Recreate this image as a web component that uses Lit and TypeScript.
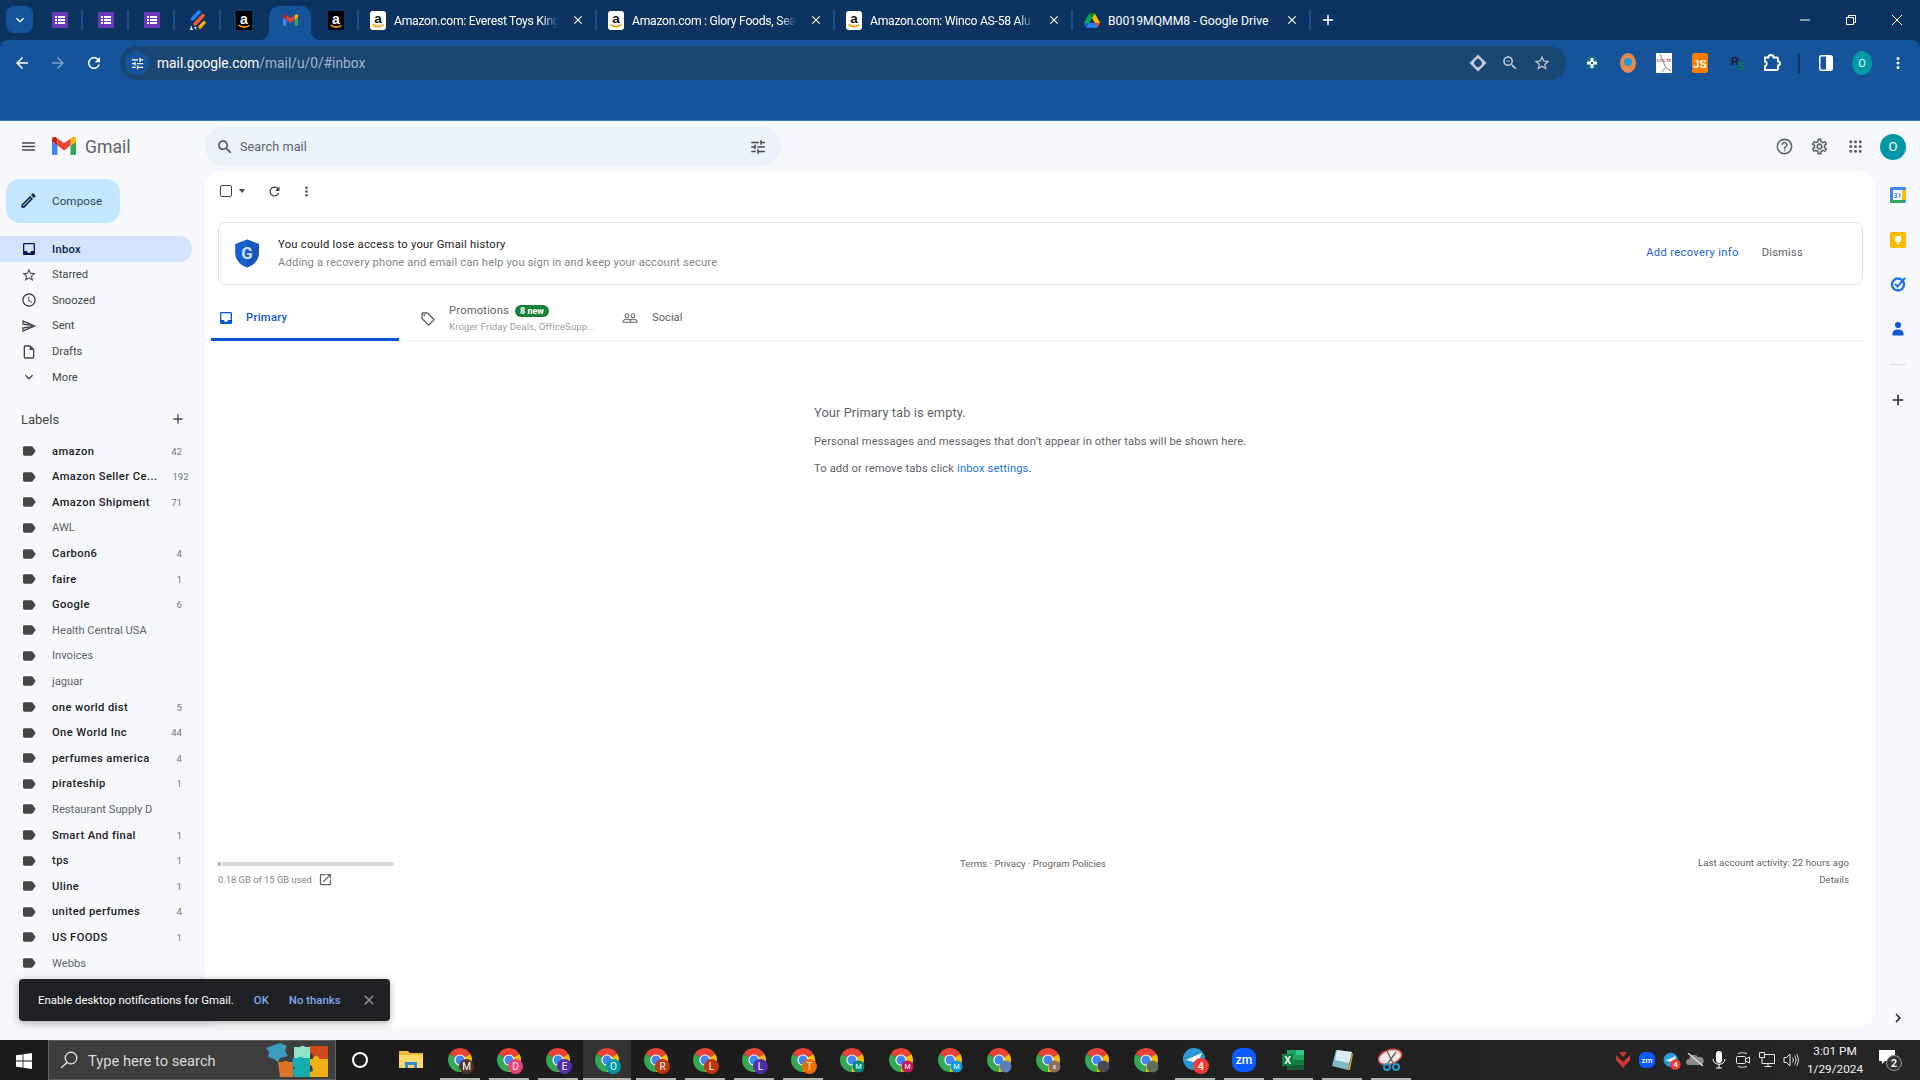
import { LitElement, html, css } from "lit";
import { customElement } from "lit/decorators.js";

const P = {
  menu: "M3 18h18v-2H3v2zm0-5h18v-2H3v2zm0-7v2h18V6H3z",
  search: "M15.5 14h-.79l-.28-.27C15.41 12.59 16 11.11 16 9.5 16 5.91 13.09 3 9.5 3S3 5.91 3 9.5 5.91 16 9.5 16c1.61 0 3.09-.59 4.23-1.57l.27.28v.79l5 4.99L20.49 19l-4.99-5zm-6 0C7.01 14 5 11.99 5 9.5S7.01 5 9.5 5 14 7.01 14 9.5 11.99 14 9.5 14z",
  zoomOut: "M15.5 14h-.79l-.28-.27C15.41 12.59 16 11.11 16 9.5 16 5.91 13.09 3 9.5 3S3 5.91 3 9.5 5.91 16 9.5 16c1.61 0 3.09-.59 4.23-1.57l.27.28v.79l5 4.99L20.49 19l-4.99-5zm-6 0C7.01 14 5 11.99 5 9.5S7.01 5 9.5 5 14 7.01 14 9.5 11.99 14 9.5 14zM7 9h5v1H7z",
  tune: "M3 17v2h6v-2H3zM3 5v2h10V5H3zm10 16v-2h8v-2h-8v-2h-2v6h2zM7 9v2H3v2h4v2h2V9H7zm14 4v-2H11v2h10zm-6-4h2V7h4V5h-4V3h-2v6z",
  help: "M11 18h2v-2h-2v2zm1-16C6.48 2 2 6.48 2 12s4.48 10 10 10 10-4.48 10-10S17.52 2 12 2zm0 18c-4.41 0-8-3.59-8-8s3.59-8 8-8 8 3.59 8 8-3.59 8-8 8zm0-14c-2.21 0-4 1.79-4 4h2c0-1.1.9-2 2-2s2 .9 2 2c0 2-3 1.75-3 5h2c0-2.25 3-2.5 3-5 0-2.21-1.79-4-4-4z",
  gear: "M19.43 12.98c.04-.32.07-.64.07-.98 0-.34-.03-.66-.07-.98l2.11-1.65c.19-.15.24-.42.12-.64l-2-3.46c-.09-.16-.26-.25-.44-.25-.06 0-.12.01-.17.03l-2.49 1c-.52-.4-1.08-.73-1.69-.98l-.38-2.65C14.46 2.18 14.25 2 14 2h-4c-.25 0-.46.18-.49.42l-.38 2.65c-.61.25-1.17.59-1.69.98l-2.49-1c-.06-.02-.12-.03-.18-.03-.17 0-.34.09-.43.25l-2 3.46c-.13.22-.07.49.12.64l2.11 1.65c-.04.32-.07.65-.07.98 0 .33.03.66.07.98l-2.11 1.65c-.19.15-.24.42-.12.64l2 3.46c.09.16.26.25.44.25.06 0 .12-.01.17-.03l2.49-1c.52.4 1.08.73 1.69.98l.38 2.65c.03.24.24.42.49.42h4c.25 0 .46-.18.49-.42l.38-2.65c.61-.25 1.17-.59 1.69-.98l2.49 1c.06.02.12.03.18.03.17 0 .34-.09.43-.25l2-3.46c.12-.22.07-.49-.12-.64l-2.11-1.65zm-1.98-1.71c.04.31.05.52.05.73 0 .21-.02.43-.05.73l-.14 1.13.89.7 1.08.84-.7 1.21-1.27-.51-1.04-.42-.9.68c-.43.32-.84.56-1.25.73l-1.06.43-.16 1.13-.2 1.35h-1.4l-.19-1.35-.16-1.13-1.06-.43c-.43-.18-.83-.41-1.23-.71l-.91-.7-1.06.43-1.27.51-.7-1.21 1.08-.84.89-.7-.14-1.13c-.03-.31-.05-.54-.05-.74s.02-.43.05-.73l.14-1.13-.89-.7-1.08-.84.7-1.21 1.27.51 1.04.42.9-.68c.43-.32.84-.56 1.25-.73l1.06-.43.16-1.13.2-1.35h1.39l.19 1.35.16 1.13 1.06.43c.43.18.83.41 1.23.71l.91.7 1.06-.43 1.27-.51.7 1.21-1.07.85-.89.7.14 1.13zM12 8c-2.21 0-4 1.79-4 4s1.79 4 4 4 4-1.79 4-4-1.79-4-4-4zm0 6c-1.1 0-2-.9-2-2s.9-2 2-2 2 .9 2 2-.9 2-2 2z",
  refresh: "M17.65 6.35C16.2 4.9 14.21 4 12 4c-4.42 0-7.99 3.58-7.99 8s3.57 8 7.99 8c3.73 0 6.84-2.55 7.73-6h-2.08c-.82 2.33-3.04 4-5.65 4-3.31 0-6-2.69-6-6s2.69-6 6-6c1.66 0 3.14.69 4.22 1.78L13 11h7V4l-2.35 2.35z",
  back: "M20 11H7.83l5.59-5.59L12 4l-8 8 8 8 1.41-1.41L7.83 13H20v-2z",
  forward: "M12 4l-1.41 1.41L16.17 11H4v2h12.17l-5.58 5.59L12 20l8-8z",
  star: "M22 9.24l-7.19-.62L12 2 9.19 8.63 2 9.24l5.46 4.73L5.82 21 12 17.27 18.18 21l-1.63-7.03L22 9.24zM12 15.4l-3.76 2.27 1-4.28-3.32-2.88 4.38-.38L12 6.1l1.71 4.04 4.38.38-3.32 2.88 1 4.28L12 15.4z",
  clock: "M11.99 2C6.47 2 2 6.48 2 12s4.47 10 9.99 10C17.52 22 22 17.52 22 12S17.52 2 11.99 2zM12 20c-4.42 0-8-3.58-8-8s3.58-8 8-8 8 3.58 8 8-3.58 8-8 8zm.5-13H11v6l5.25 3.15.75-1.23-4.5-2.67z",
  send: "M4.01 6.03l7.51 3.22-7.52-1 .01-2.22m7.5 8.72L4 17.97v-2.22l7.51-1M2.01 3L2 10l15 2-15 2 .01 7L23 12 2.01 3z",
  draft: "M14 2H6c-1.1 0-1.99.9-1.99 2L4 20c0 1.1.89 2 1.99 2H18c1.1 0 2-.9 2-2V8l-6-6zM6 20V4h7v5h5v11H6z",
  expand: "M16.59 8.59L12 13.17 7.41 8.59 6 10l6 6 6-6z",
  add: "M19 13h-6v6h-2v-6H5v-2h6V5h2v6h6v2z",
  inbox: "M19 3H5c-1.1 0-2 .9-2 2v14c0 1.1.9 2 2 2h14c1.1 0 2-.9 2-2V5c0-1.1-.9-2-2-2zm0 12h-4c0 1.66-1.35 3-3 3s-3-1.34-3-3H5V5h14v10z",
  label: "M17.63 5.84C17.27 5.33 16.67 5 16 5L5 5.01C3.9 5.01 3 5.9 3 7v10c0 1.1.9 1.99 2 1.99L16 19c.67 0 1.27-.33 1.63-.84L22 12l-4.37-6.16z",
  tag: "M21.41 11.58l-9-9C12.05 2.22 11.55 2 11 2H4c-1.1 0-2 .9-2 2v7c0 .55.22 1.05.59 1.42l9 9c.36.36.86.58 1.41.58.55 0 1.05-.22 1.41-.59l7-7c.37-.36.59-.86.59-1.41 0-.55-.23-1.06-.59-1.42zM13 20.01L4 11V4h7v-.01l9 9-7 7.02zM6.5 5A1.5 1.5 0 1 0 6.5 8 1.5 1.5 0 1 0 6.5 5z",
  people: "M16.5 13c-1.2 0-3.07.34-4.5 1-1.43-.67-3.3-1-4.5-1C5.33 13 1 14.08 1 16.25V19h22v-2.75c0-2.17-4.33-3.25-6.5-3.25zm-4 4.5h-10v-1.25c0-.54 2.56-1.75 5-1.75s5 1.21 5 1.75v1.25zm9 0H14v-1.25c0-.46-.2-.86-.52-1.22.88-.3 1.96-.53 3.02-.53 2.44 0 5 1.21 5 1.75v1.25zM7.5 12c1.93 0 3.5-1.57 3.5-3.5S9.43 5 7.5 5 4 6.57 4 8.5 5.57 12 7.5 12zm0-5.5c1.1 0 2 .9 2 2s-.9 2-2 2-2-.9-2-2 .9-2 2-2zm9 5.5c1.93 0 3.5-1.57 3.5-3.5S18.43 5 16.5 5 13 6.57 13 8.5s1.57 3.5 3.5 3.5zm0-5.5c1.1 0 2 .9 2 2s-.9 2-2 2-2-.9-2-2 .9-2 2-2z",
  pencil: "M3 17.25V21h3.75L17.81 9.94l-3.75-3.75L3 17.25zM5.92 19H5v-.92l9.06-9.06.92.92L5.92 19zM20.71 5.63l-2.34-2.34c-.2-.2-.45-.29-.71-.29s-.51.09-.7.29l-1.83 1.83 3.75 3.75 1.83-1.83c.39-.39.39-1.02 0-1.41z",
  open: "M19 19H5V5h7V3H5c-1.11 0-2 .9-2 2v14c0 1.1.89 2 2 2h14c1.1 0 2-.9 2-2v-7h-2v7zM14 3v2h3.59l-9.83 9.83 1.41 1.41L19 6.41V10h2V3h-7z",
  close: "M19 6.41L17.59 5 12 10.59 6.41 5 5 6.41 10.59 12 5 17.59 6.41 19 12 13.41 17.59 19 19 17.59 13.41 12z",
  chevron: "M10 6L8.59 7.41 13.17 12l-4.58 4.59L10 18l6-6z",
  more: "M12 8a2 2 0 1 0 0-4 2 2 0 0 0 0 4zm0 2a2 2 0 1 0 0 4 2 2 0 0 0 0-4zm0 6a2 2 0 1 0 0 4 2 2 0 0 0 0-4z",
  apps: "M6 8a2 2 0 1 0 0-4 2 2 0 0 0 0 4zm6 0a2 2 0 1 0 0-4 2 2 0 0 0 0 4zm6 0a2 2 0 1 0 0-4 2 2 0 0 0 0 4zM6 14a2 2 0 1 0 0-4 2 2 0 0 0 0 4zm6 0a2 2 0 1 0 0-4 2 2 0 0 0 0 4zm6 0a2 2 0 1 0 0-4 2 2 0 0 0 0 4zM6 20a2 2 0 1 0 0-4 2 2 0 0 0 0 4zm6 0a2 2 0 1 0 0-4 2 2 0 0 0 0 4zm6 0a2 2 0 1 0 0-4 2 2 0 0 0 0 4z",
  shield: "M12 .5 2 4.200v7.400C2 17.500 6.200 22.400 12 24c5.800-1.600 10-6.500 10-12.400V4.200z",
};

const icon = (d: string, size: number, color: string) =>
  html`<svg class="ic" width=${size} height=${size} viewBox="0 0 24 24" fill=${color}><path d=${d}></path></svg>`;

const formsIcon = () => html`<svg class="ic" width="16" height="16" viewBox="0 0 16 16">
  <rect width="16" height="16" rx="1" fill="#673ab7"></rect>
  <path d="M3 4h2v2H3zM6 4h7v2H6zM3 7h2v2H3zM6 7h7v2H6zM3 10h2v2H3zM6 10h7v2H6z" fill="#fff"></path>
</svg>`;

const amazonDark = () => html`<svg class="ic" width="16" height="19" viewBox="0 0 16 19">
  <rect width="16" height="19" fill="#000"></rect>
  <text x="8" y="12.500" text-anchor="middle" font-family="Liberation Sans" font-weight="700" font-size="14" fill="#fff">a</text>
  <path d="M2.500 14.200c3.400 2.400 7.400 2.400 11 .2" stroke="#f90" stroke-width="1.600" fill="none"></path>
</svg>`;

const amazonLight = () => html`<svg class="ic" width="16" height="19" viewBox="0 0 16 19">
  <rect width="16" height="19" rx="3" fill="#fff"></rect>
  <text x="8" y="11.500" text-anchor="middle" font-family="Liberation Sans" font-weight="700" font-size="13.500" fill="#111">a</text>
  <path d="M2.500 13.500c3.400 2.600 7.400 2.600 11 .2" stroke="#f90" stroke-width="1.600" fill="none"></path>
</svg>`;

const jiraIcon = () => html`<svg class="ic" width="16" height="20" viewBox="0 0 16 20">
  <path d="M2.500 9 9 2" stroke="#2684ff" stroke-width="3.400" stroke-linecap="round"></path>
  <path d="M5 14 13 5.500" stroke="#ff5630" stroke-width="3.400" stroke-linecap="round"></path>
  <path d="M10 17l4-4.400" stroke="#ffab00" stroke-width="3.400" stroke-linecap="round"></path>
  <path d="M1 15.500 3 20H0zM6 20l-2-3 2.400-.2z" fill="#fff"></path>
</svg>`;

const gmailLogo = (w: number, h: number) => html`<svg class="ic" width=${w} height=${h} viewBox="0 0 24 18">
  <path fill="#4285f4" d="M1.600 18H5.500V8.500L0 4.400V16.400C0 17.300.7 18 1.600 18z"></path>
  <path fill="#34a853" d="M18.500 18H22.400C23.300 18 24 17.300 24 16.400V4.400L18.500 8.500z"></path>
  <path fill="#fbbc04" d="M18.500 1.400V8.500L24 4.400V2.200C24 .2 21.700-1 20.100.2z"></path>
  <path fill="#ea4335" d="M5.500 8.500V1.400L12 6.300 18.500 1.400V8.500L12 13.400z"></path>
  <path fill="#c5221f" d="M0 2.200V4.400L5.500 8.500V1.400L3.900.2C2.300-1 0 .2 0 2.200z"></path>
</svg>`;

const driveIcon = () => html`<svg class="ic" width="16" height="15" viewBox="0 0 87.3 78">
  <path fill="#0066da" d="m6.600 66.850 3.850 6.650c.8 1.400 1.950 2.500 3.300 3.300l13.750-23.800h-27.500c0 1.550.4 3.100 1.200 4.500z"></path>
  <path fill="#00ac47" d="m43.650 25-13.750-23.800c-1.350.8-2.500 1.900-3.300 3.300l-25.400 44a9.060 9.060 0 0 0 -1.200 4.500h27.500z"></path>
  <path fill="#ea4335" d="m73.550 76.800c1.350-.8 2.500-1.900 3.300-3.300l1.600-2.750 7.650-13.250c.8-1.400 1.200-2.950 1.200-4.500h-27.502l5.852 11.500z"></path>
  <path fill="#00832d" d="m43.650 25 13.750-23.800c-1.350-.8-2.900-1.200-4.500-1.200h-18.500c-1.600 0-3.150.45-4.500 1.200z"></path>
  <path fill="#2684fc" d="m59.800 53h-32.300l-13.750 23.800c1.350.8 2.900 1.200 4.500 1.200h50.800c1.600 0 3.150-.45 4.500-1.200z"></path>
  <path fill="#ffba00" d="m73.400 26.500-12.700-22c-.8-1.400-1.950-2.500-3.300-3.300l-13.750 23.800 16.150 28h27.450c0-1.550-.4-3.100-1.200-4.500z"></path>
</svg>`;

const chromeIcon = (badge: string, letter: string, small = false) => html`<svg class="ic" width="32" height="32" viewBox="0 0 32 32">
  <path fill="#ea4335" d="M16 16 5.610 10A12 12 0 0 1 26.390 10Z"></path>
  <path fill="#fbbc04" d="M16 16 26.390 10A12 12 0 0 1 16 28Z"></path>
  <path fill="#34a853" d="M16 16 16 28A12 12 0 0 1 5.610 10Z"></path>
  <circle cx="16" cy="16" r="5.600" fill="#fff"></circle>
  <circle cx="16" cy="16" r="4.500" fill="#4285f4"></circle>
  <circle cx="22.500" cy="22.500" r=${small ? 6 : 7.5} fill=${badge}></circle>
  <text x="22.500" y=${small ? 25 : 26} text-anchor="middle" font-family="Roboto" font-size=${small ? 7 : 10} fill="#fff">${letter}</text>
</svg>`;

const puzzle = () => html`<svg class="ic" width="62" height="34" viewBox="0 0 62 34">
  <path fill="#3f9cc0" d="M0 5 14 0l7 3-2 5 3 5-8 2-2 4-4-3-6-2 1-5z"></path>
  <path fill="#92e3cc" d="M28 4h6a3 3 0 0 1 5 0h5v11H28z"></path>
  <path fill="#d2481a" d="M44 3h18v13H48l-1-4-3-2z"></path>
  <path fill="#dd7428" d="M12 19h5a3 3 0 0 1 5 0h5v15H14z"></path>
  <path fill="#17aeb2" d="M27 15h5a3 3 0 0 1 5 0h7v19H28l-2-7 3-2-3-3z"></path>
  <path fill="#f0b018" d="M44 16h18v18H44v-5l3-1-1-5-2-1z"></path>
  <circle cx="50" cy="16" r="3" fill="#f0b018"></circle>
</svg>`;

const win = () => html`<svg class="ic" width="16" height="16" viewBox="0 0 16 16">
  <path fill="#fff" d="M0 2.300 6.600 1.400V7.600H0zM7.400 1.300 16 0V7.600H7.400zM0 8.400H6.600V14.600L0 13.700zM7.400 8.400H16V16L7.400 14.700z"></path>
</svg>`;

const folder = () => html`<svg class="ic" width="24" height="24" viewBox="0 0 24 24">
  <path fill="#f0b83c" d="M0 3h9l2 2h13v15H0z"></path>
  <path fill="#ffd968" d="M0 7h24v13H0z"></path>
  <path fill="#2f8fd6" d="M6 14h12v6h-3v-3H9v3H6z"></path>
</svg>`;

const telegram = (size: number, fontSize: number) => html`<svg class="ic" width=${size} height=${size} viewBox="0 0 32 32">
  <circle cx="15" cy="15" r="11" fill="#2a9ad6"></circle>
  <path fill="#fff" d="M7 16 23 9 18 21l-3-3z"></path>
  <circle cx="22" cy="22" r="8" fill="#ef3b36"></circle>
  <text x="22" y="26" text-anchor="middle" font-family="Roboto" font-weight="500" font-size=${fontSize} fill="#fff">4</text>
</svg>`;

const zoomApp = (size: number) => html`<svg class="ic" width=${size} height=${size} viewBox="0 0 24 24">
  <rect width="24" height="24" rx="9" fill="#0b5cff"></rect>
  <text x="12" y="16" text-anchor="middle" font-family="Roboto" font-weight="500" font-size="12" fill="#fff">zm</text>
</svg>`;

const excel = () => html`<svg class="ic" width="24" height="24" viewBox="0 0 24 24">
  <path fill="#21a366" d="M6 2h17v20H6z"></path>
  <path fill="#107c41" d="M6 12h17v5H6z"></path>
  <path fill="#185c37" d="M6 17h17v5H6z"></path>
  <path fill="#33c481" d="M15 2h8v5h-8z"></path>
  <rect x="1" y="6" width="11" height="12" fill="#107c41"></rect>
  <text x="6.500" y="15.500" text-anchor="middle" font-family="Liberation Sans" font-weight="700" font-size="10" fill="#fff">X</text>
</svg>`;

const notepad = () => html`<svg class="ic" width="24" height="24" viewBox="0 0 24 24">
  <path fill="#7fb9c9" d="M6 2 22 4 18 22 2 18z"></path>
  <path fill="#d8eef2" d="M7 2 22 4 19 15 5 12z"></path>
  <path fill="#c9a63a" d="M18 22 22 5l1 1-3 16z"></path>
</svg>`;

const snip = () => html`<svg class="ic" width="26" height="24" viewBox="0 0 26 24">
  <ellipse cx="12" cy="9" rx="12" ry="7" fill="#f3e9e7" stroke="#d34b45" stroke-width="1.600" transform="rotate(-18 12 9)"></ellipse>
  <path d="M9 3l6 12M18 4 10 15" stroke="#666" stroke-width="1.400"></path>
  <circle cx="18" cy="19" r="3" fill="none" stroke="#1c9ad6" stroke-width="2"></circle>
  <circle cx="9" cy="19" r="3" fill="none" stroke="#1c9ad6" stroke-width="2"></circle>
</svg>`;

const taskChrome: [string, string, boolean][] = [
  ["#4e342e", "M", false], ["#ec407a", "D", false], ["#512da8", "E", false], ["#0097a7", "O", false],
  ["#bf360c", "R", false], ["#bf360c", "L", false], ["#512da8", "L", false], ["#ef6c00", "T", false],
  ["#00897b", "M", true], ["#c2185b", "M", true], ["#039be5", "M", true], ["#5b7fb5", "", true],
  ["#8d6e63", "x", true], ["#4a4a55", "", true], ["#5d7060", "", true],
];

const navItems = [
  ["Inbox", P.inbox, true], ["Starred", P.star, false], ["Snoozed", P.clock, false],
  ["Sent", P.send, false], ["Drafts", P.draft, false], ["More", P.expand, false],
] as [string, string, boolean][];

const labels: [string, string][] = [
  ["amazon", "42"], ["Amazon Seller Ce...", "192"], ["Amazon Shipment", "71"], ["AWL", ""],
  ["Carbon6", "4"], ["faire", "1"], ["Google", "6"], ["Health Central USA", ""], ["Invoices", ""],
  ["jaguar", ""], ["one world dist", "5"], ["One World Inc", "44"], ["perfumes america", "4"],
  ["pirateship", "1"], ["Restaurant Supply D", ""], ["Smart And final", "1"], ["tps", "1"],
  ["Uline", "1"], ["united perfumes", "4"], ["US FOODS", "1"], ["Webbs", ""],
];

@customElement("app-root")
export class AppRoot extends LitElement {
  static styles = css`
    :host {
      display: flex;
      flex-direction: column;
      width: 1920px;
      height: 1080px;
      overflow: hidden;
      font-family: Roboto, sans-serif;
      background: #0d3461;
    }
    .ic { display: block; flex: none; }

    /* browser tab strip */
    .tabstrip { display: flex; align-items: stretch; height: 40px; background: #0d3461; padding-left: 6px; flex: none; }
    .tabsearch { width: 27px; height: 27px; margin: 6px 4px 0 0; border-radius: 8px; background: #15549a; display: flex; align-items: center; justify-content: center; }
    .pin { width: 46px; display: flex; align-items: center; justify-content: center; position: relative; }
    .sep { background: linear-gradient(#1a4f8e, #1a4f8e) right center / 2px 20px no-repeat; }
    .pin.active { width: 42px; margin: 6px 2px 0; background: #15549a; border-radius: 10px 10px 0 0; padding-bottom: 6px; box-sizing: border-box; }
    .pin.active::before, .pin.active::after { content: ""; position: absolute; bottom: 0; width: 10px; height: 10px; }
    .pin.active::before { left: -10px; background: radial-gradient(circle at 0 0, transparent 10px, #15549a 10.5px); }
    .pin.active::after { right: -10px; background: radial-gradient(circle at 100% 0, transparent 10px, #15549a 10.5px); }
    .tab { width: 238px; box-sizing: border-box; display: flex; align-items: center; gap: 8px; padding: 0 12px 0 11px; color: #fff; font-size: 12.2px; }
    .tab .title { flex: 1; min-width: 0; padding-top: 1px; white-space: nowrap; letter-spacing: -.28px; -webkit-mask-image: linear-gradient(90deg, #000 88%, transparent 97%); mask-image: linear-gradient(90deg, #000 88%, transparent 97%); }
    .tab .title.full { letter-spacing: 0; -webkit-mask-image: none; mask-image: none; }
    .newtab { width: 34px; display: flex; align-items: center; justify-content: center; }
    .grow { flex: 1; }
    .winbtn { width: 46px; display: flex; align-items: center; justify-content: center; }

    /* browser toolbar */
    .toolbar { height: 80px; flex: none; background: #15549a; border-bottom: 1px solid #3f7cbd; border-radius: 8px 8px 0 0; display: flex; align-items: flex-start; }
    .navbtns { display: flex; width: 120px; height: 46px; padding-left: 4px; box-sizing: border-box; }
    .navbtn { width: 36px; height: 46px; display: flex; align-items: center; justify-content: center; }
    .omni { width: 1446px; height: 34px; margin-top: 6px; background: #1a4674; border-radius: 17px; display: flex; align-items: center; color: #fff; font-size: 13.75px; box-sizing: border-box; padding: 0 8px 0 5px; }
    .chip { width: 24px; height: 24px; border-radius: 50%; background: #15549a; display: flex; align-items: center; justify-content: center; margin-right: 8px; }
    .url { flex: 1; white-space: nowrap; }
    .url span { color: #a4b5c8; }
    .omni-ic { width: 32px; display: flex; justify-content: center; }
    .exts { display: flex; height: 46px; padding-left: 8px; box-sizing: border-box; align-items: center; }
    .ext { width: 36px; display: flex; justify-content: center; align-items: center; }
    .bar { width: 2px; height: 20px; background: #0d3461; margin: 0 8px 0 8px; }
    .tb-avatar { width: 20px; height: 24px; border-radius: 50%; background: #0097a7; color: #dff; font-size: 11px; display: flex; align-items: center; justify-content: center; }

    /* gmail shell */
    .gmail { flex: 1; display: flex; flex-direction: column; position: relative; min-height: 0; background: #f6f8fc; }
    .ghead { height: 51px; flex: none; display: flex; align-items: center; }
    .brand { width: 205px; display: flex; align-items: center; box-sizing: border-box; padding: 0 0 1px 20px; }
    .brand .word { font-size: 17.6px; color: #5f6368; margin-left: 9px; padding-top: 2px; }
    .brand .logo { margin-left: 15px; }
    .search { width: 576px; height: 39px; background: #eaf1fb; border-radius: 20px; display: flex; align-items: center; box-sizing: border-box; padding: 0 14px 0 11px; font-size: 12.6px; color: #5f6368; }
    .search .ph { flex: 1; margin-left: 6px; letter-spacing: .1px; }
    .hicons { margin-left: auto; display: flex; align-items: center; padding-right: 14px; }
    .hicons .hi { width: 35.5px; display: flex; justify-content: center; }
    .gavatar { width: 26px; height: 26px; border-radius: 50%; background: #0097a7; color: #fff; font-size: 13px; display: flex; align-items: center; justify-content: center; margin-left: 7px; }

    .gbody { flex: 1; display: flex; min-height: 0; }
    .side { width: 205px; flex: none; overflow: hidden; }
    .compose { width: 114px; height: 44px; margin: 7px 0 13.4px 6px; background: #c2e7ff; border-radius: 14px; display: flex; align-items: center; padding: 0 0 1px 13px; box-sizing: border-box; gap: 14px; color: #2a4658; font-size: 11.6px; letter-spacing: .1px; }
    .nav { width: 192px; height: 25.6px; display: flex; align-items: center; padding-left: 21px; gap: 15px; box-sizing: border-box; border-radius: 0 13px 13px 0; color: #444746; font-size: 11.2px; }
    .nav.on { background: #d3e3fd; color: #041e49; font-weight: 500; letter-spacing: .3px; }
    .lab-head { height: 32px; margin: 13.2px 0 3.2px; width: 192px; display: flex; align-items: center; justify-content: space-between; padding: 0 6px 0 21px; box-sizing: border-box; color: #444746; font-size: 13px; }
    .lab { width: 182px; height: 25.6px; display: flex; align-items: center; box-sizing: border-box; padding-left: 21px; gap: 15px; font-size: 11.2px; color: #5f6368; white-space: nowrap; }
    .lab.bold { font-weight: 500; color: #202124; letter-spacing: .4px; }
    .lab .name { flex: 1; }
    .lab .count { font-size: 9.6px; font-weight: 400; color: #777; letter-spacing: 0; }

    .card { width: 1670px; flex: none; margin-bottom: 13px; background: #fff; border-radius: 16px; display: flex; flex-direction: column; box-sizing: border-box; }
    .actions { height: 38px; flex: none; display: flex; align-items: center; padding-left: 13px; }
    .check { width: 12px; height: 12px; border: 1.5px solid #444746; border-radius: 2px; box-sizing: border-box; margin-left: 2px; }
    .caret { width: 0; height: 0; border: 3px solid transparent; border-top: 4px solid #444746; border-bottom: 0; margin-left: 7px; }
    .act { margin-left: 21.5px; }
    .act2 { margin-left: 17px; }

    .banner { margin: 12px 12px 0 13px; height: 63px; border: 1px solid #dfe1e5; border-radius: 8px; box-sizing: border-box; display: flex; align-items: center; padding-left: 16px; flex: none; }
    .banner .txt { margin-left: 19px; flex: 1; }
    .banner .t1 { font-size: 11.2px; color: #202124; line-height: 14px; letter-spacing: .27px; }
    .banner .t2 { font-size: 11.2px; color: #80868b; line-height: 14px; margin-top: 4px; letter-spacing: .16px; }
    .banner .a1 { font-size: 11.2px; color: #1a5fd6; margin: 0 23px 2px 0; letter-spacing: .33px; }
    .banner .a2 { font-size: 11.2px; color: #5f6368; margin: 0 59px 2px 0; letter-spacing: .2px; }

    .tabs { margin: 11px 12px 0 0; height: 45px; flex: none; display: flex; padding-left: 6px; box-shadow: inset 0 -1px 0 #eceff1; box-sizing: border-box; }
    .gtab { display: flex; align-items: center; box-sizing: border-box; font-size: 11.2px; color: #5f6368; }
    .gtab.primary { width: 188px; padding: 1px 0 0 7px; gap: 12px; color: #0b57d0; font-weight: 500; letter-spacing: .3px; border-bottom: 3px solid #0b57d0; }
    .gtab.promo { width: 207px; padding-left: 21px; gap: 13px; }
    .gtab.social { padding: 0 0 2px 16px; gap: 14px; }
    .promo-top { display: flex; align-items: center; gap: 6px; line-height: 14px; letter-spacing: .2px; }
    .new { background: #188038; color: #fff; font-size: 9px; font-weight: 700; line-height: 12px; padding: 0 5px; border-radius: 6px; letter-spacing: 0; }
    .promo-sub { font-size: 9.6px; color: #9aa0a6; line-height: 12px; margin-top: 3px; white-space: nowrap; letter-spacing: .12px; }

    .empty { height: 515px; flex: none; padding: 64px 0 0 609px; box-sizing: border-box; color: #5f6368; }
    .empty .h { font-size: 12.8px; line-height: 16px; margin-bottom: 13.5px; letter-spacing: .1px; }
    .empty p { font-size: 11.2px; line-height: 14px; margin: 0 0 13px; letter-spacing: .12px; }
    .empty a { color: #1a73e8; }

    .foot { display: flex; padding: 0 26px 0 13px; font-size: 9.6px; color: #5f6368; line-height: 14px; }
    .storage { width: 176px; }
    .meter { height: 4px; margin: 6px 0 6px; background: #dadce0; border-radius: 2px; border-left: 1px solid #5f6368; }
    .used { display: flex; align-items: center; gap: 6px; white-space: nowrap; font-size: 9.4px; color: #80868b; }
    .links { margin-left: 566px; letter-spacing: .02px; padding-top: .5px; }
    .activity { margin-left: auto; text-align: right; letter-spacing: .07px; }
    .activity div + div { margin-top: 3px; }

    .rail { flex: 1; display: flex; flex-direction: column; align-items: center; padding-top: 15px; padding-bottom: 13px; }
    .rail .ri { height: 44.5px; display: flex; align-items: flex-start; justify-content: center; }
    .rail .rsep { width: 16px; height: 1px; background: #dadce0; margin-bottom: 26px; margin-top: -1px; }
    .rail .rlast { margin-top: auto; }

    .snack { position: absolute; left: 19px; bottom: 19px; width: 371px; height: 42px; background: #202124; border-radius: 4px; box-shadow: 0 2px 8px rgba(0, 0, 0, .3); display: flex; align-items: center; padding-left: 19px; box-sizing: border-box; color: #fff; font-size: 11.4px; white-space: nowrap; z-index: 2; }
    .snack b { font-weight: 500; color: #7fa9ea; }
    .snack .ok { margin-left: 20px; }
    .snack .no { margin-left: 20px; }
    .snack .x { margin-left: 20px; }

    /* windows taskbar */
    .taskbar { height: 40px; flex: none; background: linear-gradient(90deg, #1b1b1b, #1e1e1e 50%, #262626); display: flex; align-items: stretch; color: #fff; }
    .start { width: 48px; display: flex; align-items: center; justify-content: center; padding-top: 1px; box-sizing: border-box; }
    .tsearch { width: 288px; box-sizing: border-box; background: #3e3e3e; border: 1px solid #636363; display: flex; align-items: center; padding-left: 11px; color: #d8d8d8; font-size: 14.7px; }
    .tsearch .ph { flex: 1; margin-left: 10px; padding-top: 2px; }
    .tsearch .ic:last-child { margin-right: 7px; }
    .cortana { width: 48px; display: flex; align-items: center; justify-content: center; margin-right: 2px; }
    .ring { width: 12px; height: 12px; border: 2px solid #fff; border-radius: 50%; }
    .app { width: 49px; display: flex; align-items: center; justify-content: center; box-sizing: border-box; }
    .app.run { background: linear-gradient(#b5b5b0, #b5b5b0) center bottom / 40px 2px no-repeat; }
    .app.active { background: linear-gradient(#b5b5b0, #b5b5b0) center bottom / 48px 2px no-repeat, linear-gradient(#333, #333) center / 48px 40px no-repeat; }
    .tray { width: 24px; display: flex; align-items: center; justify-content: center; }
    .clock { width: 64px; text-align: center; font-size: 11.8px; line-height: 18px; padding-top: 2px; box-sizing: border-box; color: #f2f2f2; white-space: nowrap; }
    .notif { width: 53px; display: flex; align-items: center; padding-left: 12px; box-sizing: border-box; }
  `;

  render() {
    const pinned = [formsIcon(), formsIcon(), formsIcon(), jiraIcon(), amazonDark()];
    const tabs: [unknown, string, boolean][] = [
      [amazonLight(), "Amazon.com: Everest Toys King", true],
      [amazonLight(), "Amazon.com : Glory Foods, Sea", true],
      [amazonLight(), "Amazon.com: Winco AS-58 Alu", true],
      [driveIcon(), "B0019MQMM8 - Google Drive", false],
    ];
    return html`
      <div class="tabstrip">
        <div class="tabsearch">${icon(P.expand, 16, "#fff")}</div>
        ${pinned.map((p, i) => html`<div class="pin ${i < 4 ? "sep" : ""}">${p}</div>`)}
        <div class="pin active">${gmailLogo(15, 12)}</div>
        <div class="pin sep">${amazonDark()}</div>
        ${tabs.map(
          ([ic, t, fade]) => html`<div class="tab sep">
            ${ic}
            <div class="title ${fade ? "" : "full"}">${t}</div>
            ${icon(P.close, 14, "#fff")}
          </div>`
        )}
        <div class="newtab">${icon(P.add, 18, "#fff")}</div>
        <div class="grow"></div>
        <div class="winbtn"><svg width="10" height="10" viewBox="0 0 10 10"><path d="M0 5h10" stroke="#fff"></path></svg></div>
        <div class="winbtn"><svg width="10" height="10" viewBox="0 0 10 10"><path d="M.5 2.500h7v7h-7zM2.500 2.500v-2h7v7h-2" stroke="#fff" fill="none"></path></svg></div>
        <div class="winbtn"><svg width="10" height="10" viewBox="0 0 10 10"><path d="M0 0l10 10M10 0 0 10" stroke="#fff"></path></svg></div>
      </div>

      <div class="toolbar">
        <div class="navbtns">
          <div class="navbtn">${icon(P.back, 18, "#fff")}</div>
          <div class="navbtn">${icon(P.forward, 18, "#7d9cc2")}</div>
          <div class="navbtn">${icon(P.refresh, 18, "#fff")}</div>
        </div>
        <div class="omni">
          <div class="chip">${icon(P.tune, 15, "#fff")}</div>
          <div class="url">mail.google.com<span>/mail/u/0/#inbox</span></div>
          <div class="omni-ic"><svg width="18" height="18" viewBox="0 0 18 18"><path d="M9 .5 17.500 9 9 17.500.5 9zM9 4.500C7 5.500 5.500 7 5 9c.5 2 2 3.500 4 4.500 2-1 3.500-2.500 4-4.500-.5-2-2-3.500-4-4.500z" fill="#c5ccd6" fill-rule="evenodd"></path></svg></div>
          <div class="omni-ic">${icon(P.zoomOut, 18, "#c5ccd6")}</div>
          <div class="omni-ic">${icon(P.star, 18, "#c5ccd6")}</div>
        </div>
        <div class="exts">
          <div class="ext"><svg width="14" height="14" viewBox="0 0 14 14"><circle cx="7" cy="7" r="7" fill="#176a8d"></circle><path d="M5.500 2h3v3.500H12v3H8.500V12h-3V8.500H2v-3h3.500z" fill="#fff"></path><circle cx="7" cy="7" r="1.200" fill="#176a8d"></circle></svg></div>
          <div class="ext"><svg width="16" height="20" viewBox="0 0 16 20"><ellipse cx="8" cy="10" rx="8" ry="10" fill="#e8894a"></ellipse><circle cx="8" cy="9" r="4" fill="#1c9ae0"></circle></svg></div>
          <div class="ext"><svg width="16" height="20" viewBox="0 0 16 20"><rect width="16" height="20" fill="#fff"></rect><text x="8" y="9" text-anchor="middle" font-size="4" font-family="Liberation Serif" font-weight="700" fill="#8a2a2a">LOG IN</text><path d="M4 1l6 14 5 3M9 15l-3 4" stroke="#888" fill="none"></path></svg></div>
          <div class="ext"><svg width="16" height="20" viewBox="0 0 16 20"><rect width="16" height="20" rx="2" fill="#f57c00"></rect><text x="8" y="14.500" text-anchor="middle" font-size="11" font-family="Liberation Sans" font-weight="700" fill="#fff">JS</text></svg></div>
          <div class="ext"><svg width="18" height="16" viewBox="0 0 18 16"><text x="4" y="10" font-size="11" font-family="Liberation Sans" font-weight="700" fill="#1a1a2a">R</text><text x="10.500" y="15" font-size="11" font-family="Liberation Sans" font-weight="700" fill="#0a7d4f">S</text></svg></div>
          <div class="ext"><svg width="17" height="18" viewBox="0 0 17 18" fill="none" stroke="#fff" stroke-width="1.800"><path d="M1 3.500h3.500a2.500 2.500 0 0 1 5 0H13a1 1 0 0 1 1 1v3a2 2 0 0 1 0 4v3.500a1 1 0 0 1-1 1H1v-4a2.300 2.300 0 0 0 0-4.500z"></path></svg></div>
          <div class="bar"></div>
          <div class="ext"><svg width="14" height="16" viewBox="0 0 14 16"><rect x=".75" y=".75" width="12.500" height="14.500" rx="2" fill="none" stroke="#fff" stroke-width="1.500"></rect><rect x="7" y="1" width="6" height="14" fill="#fff"></rect></svg></div>
          <div class="ext"><div class="tb-avatar">O</div></div>
          <div class="ext">${icon(P.more, 18, "#fff")}</div>
        </div>
      </div>

      <div class="gmail">
        <div class="ghead">
          <div class="brand">
            ${icon(P.menu, 17, "#444746")}
            <span class="logo">${gmailLogo(24, 18)}</span>
            <span class="word">Gmail</span>
          </div>
          <div class="search">
            ${icon(P.search, 18, "#444746")}
            <span class="ph">Search mail</span>
            ${icon(P.tune, 18, "#444746")}
          </div>
          <div class="hicons">
            <div class="hi">${icon(P.help, 19, "#5f6368")}</div>
            <div class="hi">${icon(P.gear, 19, "#5f6368")}</div>
            <div class="hi">${icon(P.apps, 19, "#5f6368")}</div>
            <div class="gavatar">O</div>
          </div>
        </div>

        <div class="gbody">
          <div class="side">
            <div class="compose">${icon(P.pencil, 19, "#041e49")}<span>Compose</span></div>
            ${navItems.map(([n, d, on]) => html`<div class="nav ${on ? "on" : ""}">${icon(d, 16, on ? "#041e49" : "#444746")}<span>${n}</span></div>`)}
            <div class="lab-head"><span>Labels</span>${icon(P.add, 16, "#444746")}</div>
            ${labels.map(([n, c]) => html`<div class="lab ${c ? "bold" : ""}">${icon(P.label, 16, "#444746")}<span class="name">${n}</span><span class="count">${c}</span></div>`)}
          </div>

          <div class="card">
            <div class="actions">
              <div class="check"></div>
              <div class="caret"></div>
              <div class="act">${icon(P.refresh, 15, "#444746")}</div>
              <div class="act2">${icon(P.more, 15, "#444746")}</div>
            </div>
            <div class="banner">
              <svg class="ic" width="24" height="29" viewBox="2 0 20 24.500">
                <path d=${P.shield} fill="#1a5fd0"></path>
                <path d="M12 .5V24c5.800-1.600 10-6.500 10-12.400V4.200z" fill="#1556bf"></path>
                <text x="12" y="17" text-anchor="middle" font-family="Roboto" font-weight="700" font-size="14" fill="#cfe0fb">G</text>
              </svg>
              <div class="txt">
                <div class="t1">You could lose access to your Gmail history</div>
                <div class="t2">Adding a recovery phone and email can help you sign in and keep your account secure</div>
              </div>
              <span class="a1">Add recovery info</span>
              <span class="a2">Dismiss</span>
            </div>
            <div class="tabs">
              <div class="gtab primary">${icon(P.inbox, 16, "#0b57d0")}<span>Primary</span></div>
              <div class="gtab promo">
                ${icon(P.tag, 16, "#5f6368")}
                <div>
                  <div class="promo-top"><span>Promotions</span><span class="new">8 new</span></div>
                  <div class="promo-sub">Kroger Friday Deals, OfficeSupp...</div>
                </div>
              </div>
              <div class="gtab social">${icon(P.people, 16, "#5f6368")}<span>Social</span></div>
            </div>
            <div class="empty">
              <div class="h">Your Primary tab is empty.</div>
              <p>Personal messages and messages that don’t appear in other tabs will be shown here.</p>
              <p>To add or remove tabs click <a>inbox settings</a>.</p>
            </div>
            <div class="foot">
              <div class="storage">
                <div class="meter"></div>
                <div class="used"><span>0.18 GB of 15 GB used</span>${icon(P.open, 15, "#5f6368")}</div>
              </div>
              <div class="links">Terms · Privacy · Program Policies</div>
              <div class="activity"><div>Last account activity: 22 hours ago</div><div>Details</div></div>
            </div>
          </div>

          <div class="rail">
            <div class="ri"><svg width="16" height="16" viewBox="0 0 16 16"><rect width="16" height="16" rx="1.500" fill="#4285f4"></rect><rect x="12" y="3" width="4" height="10" fill="#fbbc04"></rect><rect y="13" width="13" height="3" fill="#34a853"></rect><rect x="3" y="3" width="9" height="10" fill="#fff"></rect><text x="7.500" y="11" text-anchor="middle" font-size="7" font-family="Roboto" font-weight="700" fill="#4285f4">31</text></svg></div>
            <div class="ri"><svg width="16" height="16" viewBox="0 0 16 16"><rect width="16" height="16" rx="2" fill="#fbbc04"></rect><circle cx="8" cy="7" r="3.300" fill="#fff"></circle><rect x="6.500" y="11" width="3" height="1.400" fill="#fff"></rect></svg></div>
            <div class="ri"><svg width="16" height="16" viewBox="0 0 16 16" fill="none"><circle cx="8" cy="8.500" r="6" stroke="#1a73e8" stroke-width="2.400"></circle><path d="M5 8l2.500 2.500L15 2" stroke="#1a73e8" stroke-width="2"></path></svg></div>
            <div class="ri"><svg width="16" height="16" viewBox="0 0 16 16" fill="#0b57d0"><circle cx="8" cy="4" r="3"></circle><path d="M2.500 14.500v-2c0-2.500 2.500-4 5.500-4s5.500 1.500 5.500 4v2z"></path></svg></div>
            <div class="rsep"></div>
            <div class="ri">${icon(P.add, 18, "#202124")}</div>
            <div class="rlast">${icon(P.chevron, 18, "#202124")}</div>
          </div>
        </div>

        <div class="snack">
          <span>Enable desktop notifications for Gmail.</span>
          <b class="ok">OK</b>
          <b class="no">No thanks</b>
          <span class="x">${icon(P.close, 16, "#9aa0a6")}</span>
        </div>
      </div>

      <div class="taskbar">
        <div class="start">${win()}</div>
        <div class="tsearch">
          <svg class="ic" width="18" height="18" viewBox="0 0 18 18" fill="none" stroke="#e8e8e8" stroke-width="1.300"><circle cx="11" cy="7" r="5.800"></circle><path d="M7 11.500 1 17"></path></svg>
          <span class="ph">Type here to search</span>
          ${puzzle()}
        </div>
        <div class="cortana"><div class="ring"></div></div>
        <div class="app">${folder()}</div>
        ${taskChrome.map(([c, l, s], i) => html`<div class="app ${i === 3 ? "active" : i < 8 ? "run" : ""}">${chromeIcon(c, l, s)}</div>`)}
        <div class="app run">${telegram(32, 11)}</div>
        <div class="app run">${zoomApp(24)}</div>
        <div class="app run">${excel()}</div>
        <div class="app run">${notepad()}</div>
        <div class="app run">${snip()}</div>
        <div class="grow"></div>
        <div class="tray"><svg width="14" height="16" viewBox="0 0 14 16"><path d="M3 0h8L7 5zM0 3l7 7 7-7v5l-7 8-7-8z" fill="#d03a36"></path></svg></div>
        <div class="tray">${zoomApp(16)}</div>
        <div class="tray">${telegram(21, 12)}</div>
        <div class="tray"><svg width="18" height="14" viewBox="0 0 18 14"><path d="M3 12a3 3 0 0 1 0-6 5 5 0 0 1 9-2 4 4 0 0 1 3 8z" fill="#8a8a8a"></path><path d="M2 0l15 13" stroke="#ddd" stroke-width="1.500"></path></svg></div>
        <div class="tray"><svg width="14" height="18" viewBox="0 0 14 18"><rect x="4" y="0" width="6" height="12" rx="3" fill="#fff"></rect><path d="M1 8c0 7 12 7 12 0M7 13v4M4 17h6" stroke="#fff" fill="none"></path></svg></div>
        <div class="tray"><svg width="16" height="16" viewBox="0 0 16 16" fill="none" stroke="#e8e8e8"><rect x="1.500" y="4.500" width="9" height="7" rx="1"></rect><path d="M10.500 7 14.500 5v6l-4-2M3 1.500c3-1 6-1 9 0M3 14.500c3 1 6 1 9 0"></path></svg></div>
        <div class="tray"><svg width="16" height="16" viewBox="0 0 16 16" fill="none" stroke="#e8e8e8"><path d="M5.500 2.500h10v9H3M9 11.500v3M5.500 14.500h7M.5.500h5v5h-5zM3 5.500v6"></path></svg></div>
        <div class="tray"><svg width="16" height="16" viewBox="0 0 16 16" fill="none" stroke="#e8e8e8"><path d="M1 5.500h2.500L7 2v12l-3.500-3.500H1zM9.500 5.500c1 1.500 1 3.500 0 5M11.500 3.500c2 3 2 6 0 9M13.500 2c2.500 4 2.500 8 0 12"></path></svg></div>
        <div class="clock"><div>3:01 PM</div><div>1/29/2024</div></div>
        <div class="notif"><svg width="26" height="26" viewBox="0 0 26 26"><path d="M0 3h16v11H6l-3 3v-3H0z" fill="#fff"></path><circle cx="15" cy="16" r="7.500" fill="#333" stroke="#999"></circle><text x="15" y="20" text-anchor="middle" font-family="Roboto" font-weight="700" font-size="11" fill="#eee">2</text></svg></div>
      </div>
    `;
  }
}
